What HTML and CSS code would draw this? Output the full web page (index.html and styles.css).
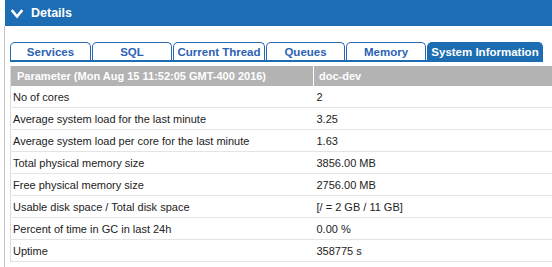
FILE: index.html
```html
<!DOCTYPE html>
<html>
<head>
<meta charset="utf-8">
<link rel="stylesheet" href="styles.css">
</head>
<body>
<div class="panel">
  <div class="panel-header">
    <svg class="chev" width="12" height="10" viewBox="0 0 12 10"><polyline points="1.5,2 6,7.5 10.5,2" fill="none" stroke="#fff" stroke-width="2.6" stroke-linecap="square"/></svg>
    <span class="title">Details</span>
  </div>
  <div class="panel-body">
    <div class="tabs">
      <div class="tab">Services</div>
      <div class="tab">SQL</div>
      <div class="tab">Current Thread</div>
      <div class="tab">Queues</div>
      <div class="tab">Memory</div>
      <div class="tab active">System Information</div>
    </div>
    <table class="info">
      <thead>
        <tr><th class="c1">Parameter (Mon Aug 15 11:52:05 GMT-400 2016)</th><th class="c2">doc-dev</th></tr>
      </thead>
      <tbody>
        <tr><td>No of cores</td><td>2</td></tr>
        <tr><td>Average system load for the last minute</td><td>3.25</td></tr>
        <tr><td>Average system load per core for the last minute</td><td>1.63</td></tr>
        <tr><td>Total physical memory size</td><td>3856.00 MB</td></tr>
        <tr><td>Free physical memory size</td><td>2756.00 MB</td></tr>
        <tr><td>Usable disk space / Total disk space</td><td>[/ = 2 GB / 11 GB]</td></tr>
        <tr><td>Percent of time in GC in last 24h</td><td>0.00 %</td></tr>
        <tr><td>Uptime</td><td>358775 s</td></tr>
      </tbody>
    </table>
  </div>
</div>
</body>
</html>
```

FILE: styles.css
```css
html, body {
  margin: 0;
  padding: 0;
  overflow: hidden;
  background: #fff;
}
body {
  font-family: "Liberation Sans", Arial, sans-serif;
  font-size: 11px;
  color: #222;
}
.panel {
  margin-left: 4px;
  width: 548px;
}
.panel-header {
  height: 26px;
  background: #1c6db4;
  display: flex;
  align-items: center;
  padding-left: 6px;
  margin-left: 1px;
}
.chev {
  display: block;
  margin-right: 8px;
  margin-top: 1px;
}
.title {
  color: #fff;
  font-weight: bold;
  font-size: 12.5px;
}
.panel-body {
  border-left: 1px solid #c4c4c4;
  padding: 16px 0 6px 5px;
}
.tabs {
  display: inline-grid;
  grid-template-columns: 81px 80px 92px 79px 80px 116px;
  column-gap: 1px;
  border-bottom: 2px solid #1c6db4;
  vertical-align: top;
}
.tab {
  height: 16px;
  border: 1px solid #2a68b6;
  border-bottom: none;
  border-radius: 5px 5px 0 0;
  text-align: center;
  line-height: 16px;
  font-weight: bold;
  font-size: 11.5px;
  color: #2c62b4;
  padding-top: 1px;
}
.tab.active {
  background: #1c6db4;
  border-color: #1c6db4;
  color: #fff;
}
.info {
  margin-top: 4px;
  border-collapse: collapse;
  width: 542px;
  table-layout: fixed;
  border-left: 1px solid #dcdcdc;
}
.info th {
  background: #b3b3b3;
  color: #fff;
  font-weight: bold;
  text-align: left;
  height: 20px;
  padding: 0 0 0 5px;
  font-size: 11px;
}
.info th.c1 {
  width: 296px;
  border-right: 1px solid #fff;
  padding-left: 6px;
}
.info td {
  height: 21px;
  padding: 0 0 0 2px;
  border-bottom: 1px solid #e4e4e4;
  white-space: nowrap;
}
.info td + td {
  padding-left: 3px;
}
```
